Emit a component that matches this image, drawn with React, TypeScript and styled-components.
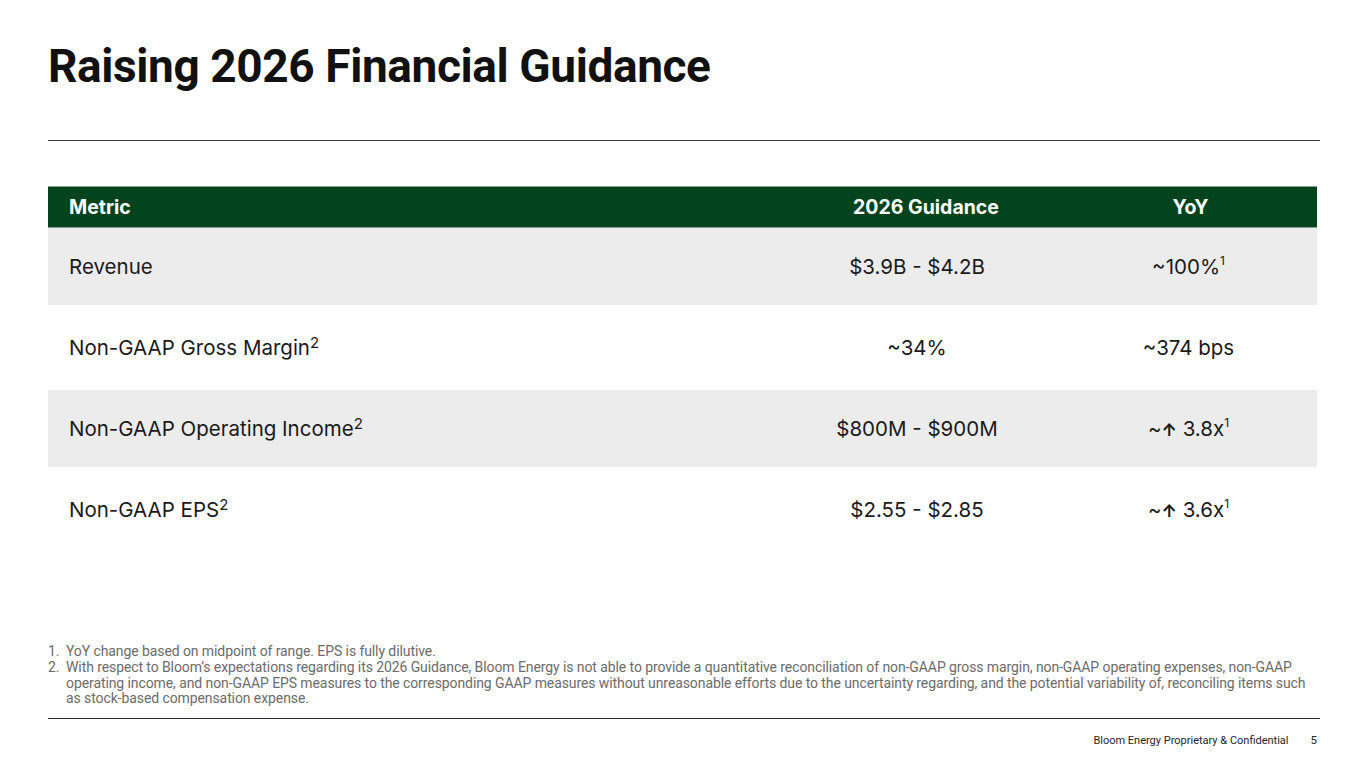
import styled, { createGlobalStyle } from "styled-components";

type Row = {
  metric: string;
  metricNote?: string;
  guidance: string;
  yoy: string;
  yoyUp?: boolean;
  yoyNote?: string;
};

const rows: Row[] = [
  { metric: "Revenue", guidance: "$3.9B - $4.2B", yoy: "100%", yoyNote: "1" },
  { metric: "Non-GAAP Gross Margin", metricNote: "2", guidance: "~34%", yoy: "374 bps" },
  {
    metric: "Non-GAAP Operating Income",
    metricNote: "2",
    guidance: "$800M - $900M",
    yoy: "3.8x",
    yoyUp: true,
    yoyNote: "1",
  },
  {
    metric: "Non-GAAP EPS",
    metricNote: "2",
    guidance: "$2.55 - $2.85",
    yoy: "3.6x",
    yoyUp: true,
    yoyNote: "1",
  },
];

const notes = [
  "YoY change based on midpoint of range. EPS is fully dilutive.",
  "With respect to Bloom’s expectations regarding its 2026 Guidance, Bloom Energy is not able to provide a quantitative reconciliation of non-GAAP gross margin, non-GAAP operating expenses, non-GAAP operating income, and non-GAAP EPS measures to the corresponding GAAP measures without unreasonable efforts due to the uncertainty regarding, and the potential variability of, reconciling items such as stock-based compensation expense.",
];

const App = (): JSX.Element => {
  return (
    <>
      <GlobalStyle />
      <Slide>
        <Title>Raising 2026 Financial Guidance</Title>
        <Rule />
        <Table>
          <HeadRow>
            <HeadCell>Metric</HeadCell>
            <HeadCell $center $indent={18}>
              2026 Guidance
            </HeadCell>
            <HeadCell $center $indent={4}>
              YoY
            </HeadCell>
          </HeadRow>
          {rows.map((r, i) => (
            <BodyRow key={r.metric} $shaded={i % 2 === 0} $tall={i % 2 === 1}>
              <Cell>
                {r.metric}
                {r.metricNote && <MetricSup>{r.metricNote}</MetricSup>}
              </Cell>
              <Cell $center>{r.guidance}</Cell>
              <Cell $center>
                ~{r.yoyUp && <Arrow>↑</Arrow>}
                {r.yoyUp ? " " : ""}
                {r.yoy}
                {r.yoyNote && <YoySup>{r.yoyNote}</YoySup>}
              </Cell>
            </BodyRow>
          ))}
        </Table>
        <Spacer />
        <Notes>
          {notes.map((n, i) => (
            <Note key={i}>
              <NoteNum>{i + 1}.</NoteNum>
              <span>{n}</span>
            </Note>
          ))}
        </Notes>
        <BottomRule />
        <Footer>
          <span>Bloom Energy Proprietary &amp; Confidential</span>
          <PageNo>5</PageNo>
        </Footer>
      </Slide>
    </>
  );
};

export default App;

const GlobalStyle = createGlobalStyle`
  html, body {
    margin: 0;
    padding: 0;
    background: #ffffff;
  }
`;

const Slide = styled.div`
  width: 1365px;
  height: 768px;
  box-sizing: border-box;
  padding: 38px 45px 0 48px;
  display: flex;
  flex-direction: column;
  font-family: "Liberation Sans", Arial, sans-serif;
  color: #1a1a1a;
  overflow: hidden;
`;

const Title = styled.h1`
  margin: 0;
  font-family: Roboto, "Liberation Sans", sans-serif;
  font-size: 46px;
  line-height: 56px;
  font-weight: 700;
  letter-spacing: -0.4px;
  color: #111111;
`;

const Rule = styled.div`
  margin-top: 46px;
  height: 1px;
  background: #3a3a3a;
`;

const Table = styled.div`
  margin-top: 45px;
  width: 1269px;
  display: flex;
  flex-direction: column;
`;

const HeadRow = styled.div`
  display: grid;
  grid-template-columns: 726px 286px 257px;
  align-items: center;
  height: 42px;
  box-sizing: border-box;
  background: #03441f;
  border-top: 1px solid #86a08f;
  border-bottom: 1px solid #86a08f;
`;

const HeadCell = styled.div<{ $center?: boolean; $indent?: number }>`
  padding-left: ${(p) => (p.$center ? `${p.$indent ?? 0}px` : "21px")};
  text-align: ${(p) => (p.$center ? "center" : "left")};
  font-family: Inter, "Liberation Sans", sans-serif;
  font-weight: 700;
  font-size: 19.5px;
  color: #ffffff;
`;

const BodyRow = styled.div<{ $shaded: boolean; $tall: boolean }>`
  display: grid;
  grid-template-columns: 726px 286px 257px;
  align-items: center;
  height: ${(p) => (p.$tall ? "85px" : "77px")};
  background: ${(p) => (p.$shaded ? "#ececec" : "#ffffff")};
`;

const Cell = styled.div<{ $center?: boolean }>`
  padding-left: ${(p) => (p.$center ? "0" : "21px")};
  text-align: ${(p) => (p.$center ? "center" : "left")};
  font-family: Inter, "Liberation Sans", sans-serif;
  font-size: 20.5px;
  color: #1a1a1a;
`;

const MetricSup = styled.sup`
  font-size: 15px;
  line-height: 0;
  vertical-align: 7px;
`;

const YoySup = styled.sup`
  font-size: 12px;
  line-height: 0;
  vertical-align: 9px;
`;

const Arrow = styled.span`
  font-weight: 700;
  font-size: 17px;
`;

const Spacer = styled.div`
  flex: 1;
`;

const Notes = styled.ol`
  margin: 0;
  padding: 0;
  list-style: none;
  width: 1258px;
  font-family: Roboto, "Liberation Sans", sans-serif;
  font-size: 14px;
  line-height: 15.7px;
  letter-spacing: -0.09px;
  color: #6b6b6b;
`;

const Note = styled.li`
  display: flex;
`;

const NoteNum = styled.span`
  flex: none;
  width: 18px;
`;

const BottomRule = styled.div`
  margin-top: 11px;
  height: 1px;
  width: 1272px;
  background: #2a2a2a;
`;

const Footer = styled.div`
  display: flex;
  justify-content: flex-end;
  align-items: baseline;
  gap: 22px;
  width: 1272px;
  height: 49px;
  padding-top: 14px;
  box-sizing: border-box;
  font-family: Roboto, "Liberation Sans", sans-serif;
  font-size: 11px;
  color: #1f1f1f;
`;

const PageNo = styled.span`
  font-size: 11.5px;
  padding-right: 3px;
`;
